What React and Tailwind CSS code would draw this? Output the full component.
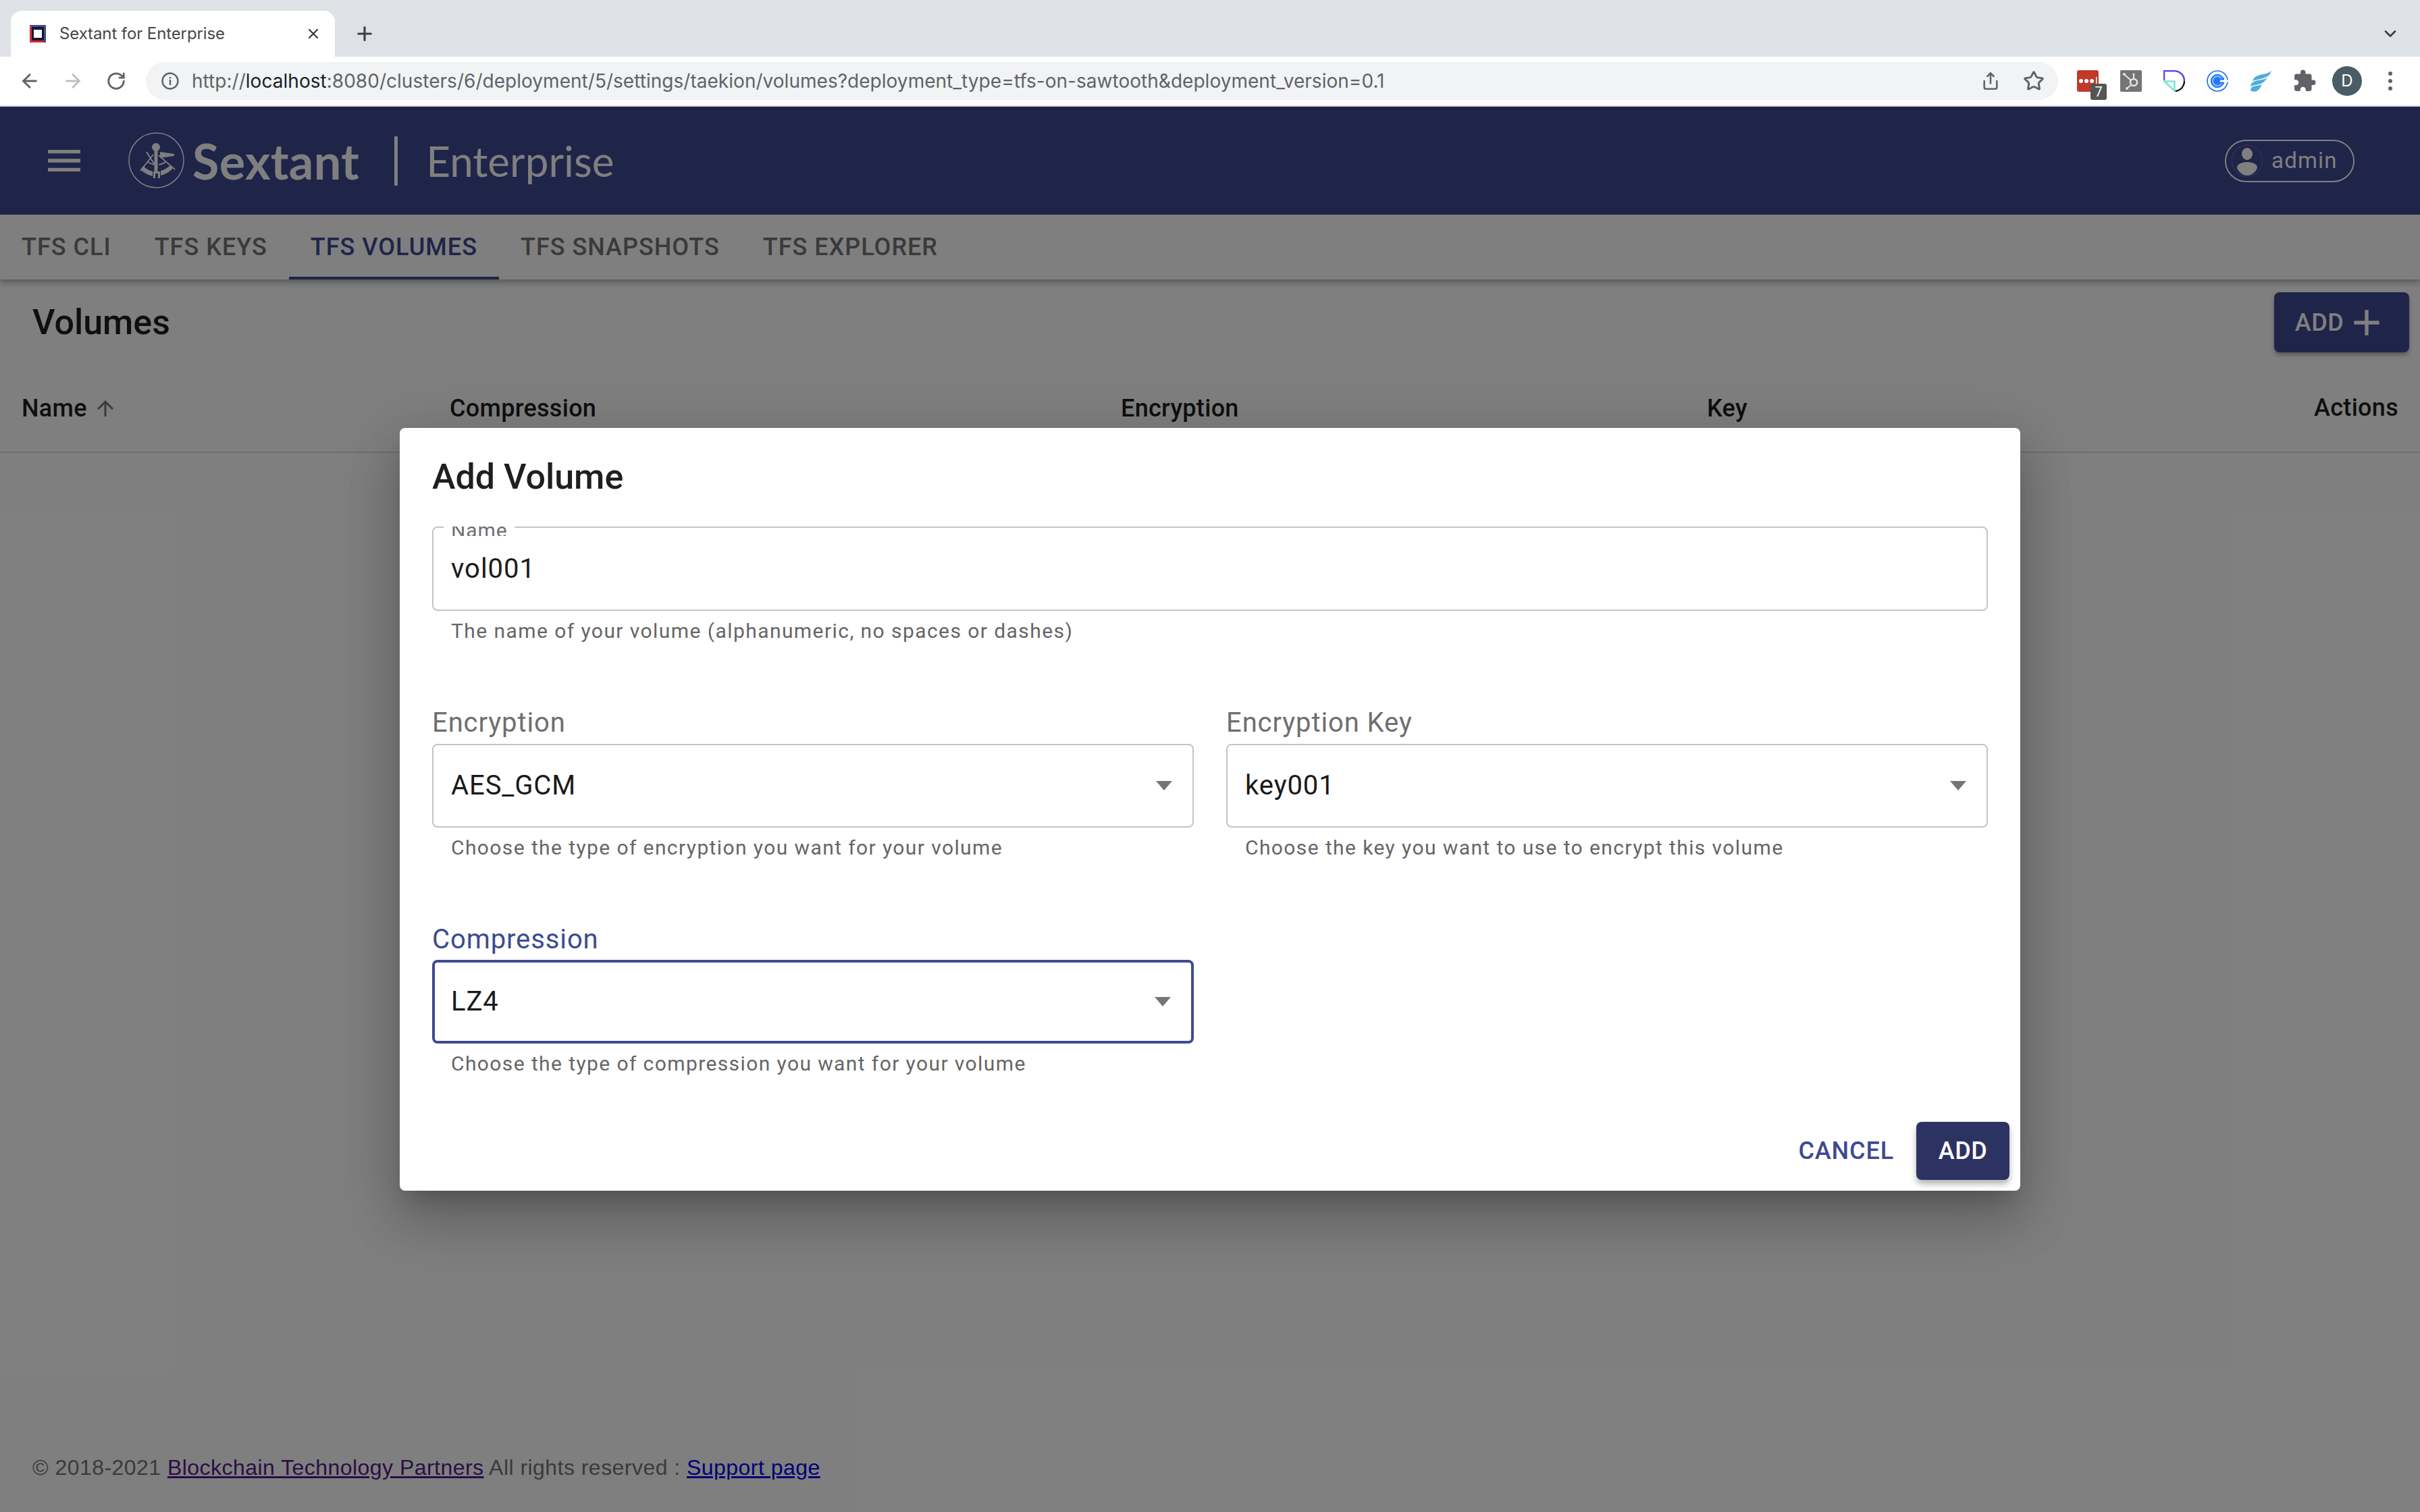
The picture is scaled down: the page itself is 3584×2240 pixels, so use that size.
import React from "react";
import { ArrowLeft, ArrowRight, RotateCw, Share, Star, X, Plus, ChevronDown } from "lucide-react";
import { MdExtension, MdMenu, MdAdd, MdArrowUpward } from "react-icons/md";

function Favicon() {
  return (
    <svg width="24" height="26" viewBox="0 0 24 26">
      <rect x="0" y="0" width="24" height="26" rx="1" fill="#3f4b91" />
      <path d="M0 2h3v21h18v3H0z" fill="#d32f3f" />
      <rect x="3" y="3" width="18" height="20" fill="#14162c" />
      <rect x="6" y="7" width="12" height="12" fill="#fff" />
    </svg>
  );
}

function LastPass() {
  return (
    <div className="relative h-8 w-8">
      <svg width="32" height="32" viewBox="0 0 32 32">
        <rect width="32" height="32" rx="3" fill="#c0392b" />
        <circle cx="6" cy="16" r="3" fill="#fff" />
        <circle cx="14" cy="16" r="3" fill="#fff" />
        <circle cx="22" cy="16" r="3" fill="#fff" />
        <rect x="28" y="10" width="1.5" height="12" fill="#fff" />
      </svg>
      <span className="absolute left-[20px] top-[20px] flex h-6 w-6 items-center justify-center rounded-[3px] bg-[#555555] text-[20px] leading-none text-white">7</span>
    </div>
  );
}

function Hubspot() {
  return (
    <svg width="32" height="32" viewBox="0 0 32 32">
      <rect width="32" height="32" rx="2" fill="#757575" />
      <circle cx="20" cy="18" r="5" fill="none" stroke="#e6e6e6" strokeWidth="2.5" />
      <path d="M20 13V7M16 15L7 7M16 22l-5 4" stroke="#e6e6e6" strokeWidth="2" fill="none" />
      <circle cx="20" cy="6" r="1.6" fill="#e6e6e6" />
      <circle cx="6" cy="6" r="2" fill="#e6e6e6" />
      <circle cx="10" cy="27" r="2" fill="#e6e6e6" />
    </svg>
  );
}

function DocMark() {
  return (
    <svg width="32" height="32" viewBox="0 0 32 32">
      <path d="M1 15V1h15c8 0 15 6 15 15" fill="none" stroke="#5b3df5" strokeWidth="2.4" />
      <path d="M31 16c0 8-6 15-14 15" fill="none" stroke="#111" strokeWidth="2.4" />
      <path d="M1.500 16.500h15v14z" fill="none" stroke="#7fe5cf" strokeWidth="2.6" />
    </svg>
  );
}

function Calendly() {
  return (
    <svg width="32" height="32" viewBox="0 0 32 32">
      <circle cx="16" cy="16" r="15" fill="none" stroke="#1a6cf0" strokeWidth="1.6" />
      <circle cx="16" cy="16" r="10.5" fill="#2f72f5" />
      <path d="M25 10c-2-3-5-5-9-5-6 0-11 5-11 11s5 11 11 11c4 0 7-2 9-5" fill="none" stroke="#fff" strokeWidth="1.4" />
      <path d="M22 12c-1.500-2-3.500-3-6-3a7 7 0 000 14c2.500 0 4.500-1 6-3" fill="none" stroke="#55d7ff" strokeWidth="2" />
      <path d="M20 16h12" stroke="#fff" strokeWidth="3" />
    </svg>
  );
}

function Feather() {
  return (
    <svg width="32" height="32" viewBox="0 0 32 32">
      <path d="M32 0C28 6 20 5 12 8 8 9.500 5 12 4 16c8-3 18-3 25-9 1-2 2-4 3-7z" fill="#4eadd9" />
      <path d="M26 11c-6 4-14 3-20 6-3 1.500-5 4-5 7 7-3 17-2 22-9 1-1 2-3 3-4z" fill="#4eadd9" />
      <path d="M18 21c-4 2-9 1.500-13 3-3 1-4 4-4 6 2 2 6 2 9 1 4-2 6-6 8-10z" fill="#4eadd9" />
    </svg>
  );
}

function SextantLogo() {
  return (
    <svg width="84" height="84" viewBox="0 0 84 84" className="shrink-0">
      <circle cx="41.500" cy="41.500" r="40.500" fill="none" stroke="#fff" strokeWidth="1.500" />
      <circle cx="41" cy="22" r="6" fill="#fff" />
      <path d="M38.500 27h5v32h-5z" fill="#fff" />
      <path d="M37 58h10v10H37z" fill="#fff" />
      <path d="M40 61h4v7h-4z" fill="#3e4892" />
      <path d="M47 29l21 3v3l-21 3z" fill="#fff" />
      <path d="M27 29l12 19" stroke="#fff" strokeWidth="2" />
      <path d="M37 33L18 57M45 34l24 21" stroke="#fff" strokeWidth="1.800" fill="none" />
      <path d="M18 55l4-5c4 4 10 7 14 8v7c-7-2-13-5-18-10z" fill="#fff" />
      <path d="M66 53l-4-4c-4 4-10 7-14 8v7c7-2 13-5 18-11z" fill="#fff" />
      <path d="M29 44c3 2 6 3 9 4M45 48c4-1 8-2 10-4" stroke="#fff" strokeWidth="1.800" fill="none" />
    </svg>
  );
}

function PersonBadge() {
  return (
    <svg width="46" height="50" viewBox="0 0 46 50" className="shrink-0">
      <circle cx="23" cy="25" r="23" fill="none" stroke="#fff" strokeOpacity="0.25" strokeWidth="1" />
      <ellipse cx="23" cy="15" rx="8" ry="9" fill="#fff" />
      <path d="M23 27c9 0 15 4 15 8s-7 12-15 12S8 39 8 35s6-8 15-8z" fill="#fff" />
    </svg>
  );
}

function InfoIcon() {
  return (
    <svg width="28" height="28" viewBox="0 0 28 28" className="shrink-0">
      <circle cx="14" cy="14" r="11.500" fill="none" stroke="#5f6368" strokeWidth="2.400" />
      <rect x="12.800" y="12" width="2.400" height="8" fill="#5f6368" />
      <rect x="12.800" y="8" width="2.400" height="2.400" fill="#5f6368" />
    </svg>
  );
}

function BrowserChrome() {
  return (
    <div className="shrink-0">
      <div className="flex h-[84px] items-end bg-[#dee1e6]">
        <div className="ml-4 flex h-[68px] w-[480px] items-center rounded-t-2xl bg-white pl-7 pr-5 text-[#45474a]">
          <Favicon />
          <span className="ml-5 flex-1 font-['Inter',sans-serif] text-[24px] leading-none tracking-[-0.1px]">Sextant for Enterprise</span>
          <X size={24} strokeWidth={2.4} className="text-[#3c4043]" />
        </div>
        <div className="ml-[28px] flex h-[68px] items-center text-[#3c4043]">
          <Plus size={32} strokeWidth={2.4} />
        </div>
        <div className="ml-auto flex h-[68px] items-center pr-[30px] text-[#3c4043]">
          <ChevronDown size={28} strokeWidth={2.4} />
        </div>
      </div>
      <div className="flex h-[74px] items-center border-b-2 border-[#dadce0] bg-white">
        <div className="flex w-[216px] items-center pl-[28px] text-[#5f6368]">
          <ArrowLeft size={32} strokeWidth={2.2} />
          <ArrowRight size={32} strokeWidth={2.2} className="ml-[32px] text-[#bdc1c6]" />
          <RotateCw size={30} strokeWidth={2.2} className="ml-[33px]" />
        </div>
        <div className="flex h-[56px] w-[2832px] items-center rounded-full bg-[#f1f3f4] pl-[22px] pr-[20px]">
          <InfoIcon />
          <span className="ml-[18px] flex-1 font-['Inter',sans-serif] text-[28px] leading-none tracking-[0.03px] text-[#5f6368]">
            http://<span className="text-[#202124]">localhost</span>:8080/clusters/6/deployment/5/settings/taekion/volumes?deployment_type=tfs-on-sawtooth&deployment_version=0.1
          </span>
          <Share size={28} strokeWidth={2.2} className="text-[#5f6368]" />
          <Star size={32} strokeWidth={2.2} className="ml-[34px] text-[#5f6368]" />
        </div>
        <div className="ml-[28px] flex items-center">
          <LastPass />
          <div className="ml-8"><Hubspot /></div>
          <div className="ml-8"><DocMark /></div>
          <div className="ml-8"><Calendly /></div>
          <div className="ml-8"><Feather /></div>
          <MdExtension size={36} className="ml-[31px] text-[#5f6368]" />
          <span className="ml-[23px] flex h-11 w-11 items-center justify-center rounded-full bg-[#4a5c66] font-['Inter',sans-serif] text-[24px] text-white">D</span>
          <span className="ml-[39px] flex flex-col gap-[5px]">
            <i className="block h-[6px] w-[6px] rounded-full bg-[#5f6368]" />
            <i className="block h-[6px] w-[6px] rounded-full bg-[#5f6368]" />
            <i className="block h-[6px] w-[6px] rounded-full bg-[#5f6368]" />
          </span>
        </div>
      </div>
    </div>
  );
}

function SelectField({ label, value, help, focused }) {
  return (
    <div>
      <div className={`mb-2 h-12 text-[40px] tracking-[0.9px] ${focused ? "leading-[52px] text-[#3e4a92]" : "leading-[50px] text-[#6f6f6f]"}`}>{label}</div>
      <div className={`flex h-[124px] items-center rounded-lg bg-white pr-[30px] text-[40px] tracking-[0.9px] text-[#1a1a1a] ${focused ? "border-4 border-[#3e4a92] pl-6" : "border-2 border-[#c4c4c4] pl-[26px]"}`}>
        <span className="flex-1">{value}</span>
        <span className="h-0 w-0 border-x-[12px] border-t-[14px] border-x-transparent border-t-[#757575]" />
      </div>
      <div className="mt-3 h-9 pl-7 text-[30px] leading-9 tracking-[1.4px] text-[#666666]">{help}</div>
    </div>
  );
}

function AddVolumeDialog() {
  return (
    <div className="flex h-[1130px] w-[2400px] flex-col rounded-lg bg-white shadow-[0_22px_30px_-14px_rgba(0,0,0,0.2),0_48px_76px_6px_rgba(0,0,0,0.14),0_18px_92px_16px_rgba(0,0,0,0.12)]">
      <div className="flex h-[146px] items-start px-12 pt-[38px]">
        <h2 className="text-[52px] font-medium leading-[70px] text-[#1f1f1f]">Add Volume</h2>
      </div>
      <div className="px-12">
        <div className="relative">
          <div className="flex h-[125px] items-center rounded-lg border-2 border-[#c4c4c4] pl-[26px] text-[40px] tracking-[1px] text-[#1a1a1a]">vol001</div>
          <span className="absolute left-[17px] top-0 h-[14px] w-[105px] overflow-hidden bg-white pl-[11px] text-[30px] leading-[11px] tracking-[0.9px] text-[#6f6f6f]">Name</span>
        </div>
        <div className="mt-3 h-9 pl-7 text-[30px] leading-9 tracking-[1.43px] text-[#666666]">The name of your volume (alphanumeric, no spaces or dashes)</div>
        <div className="mt-[93px] grid grid-cols-2 gap-x-12 gap-y-[92px]">
          <SelectField label="Encryption" value="AES_GCM" help="Choose the type of encryption you want for your volume" />
          <SelectField label="Encryption Key" value="key001" help="Choose the key you want to use to encrypt this volume" />
          <SelectField label="Compression" value="LZ4" help="Choose the type of compression you want for your volume" focused />
        </div>
      </div>
      <div className="mt-auto flex items-center justify-end gap-[33px] pb-4 pr-4">
        <button className="text-[36px] font-medium tracking-[0.9px] text-[#3e4a92]">CANCEL</button>
        <button className="h-[86px] w-[138px] rounded-lg bg-[#2c3363] text-[36px] font-medium tracking-[0.5px] text-white shadow-[0_6px_10px_rgba(0,0,0,0.3)]">ADD</button>
      </div>
    </div>
  );
}

export default function App() {
  return (
    <div className="flex h-[2240px] w-[3584px] flex-col overflow-hidden bg-white font-['Roboto',sans-serif]">
      <BrowserChrome />
      <div className="relative flex flex-1 flex-col">
        <header className="flex h-[160px] shrink-0 items-center bg-[#3e4892] text-white">
          <MdMenu size={64} className="ml-[63px]" />
          <div className="ml-[63px]"><SextantLogo /></div>
          <span className="ml-[11px] font-['Lato',sans-serif] text-[72px] font-bold leading-none tracking-[0.3px]">Sextant</span>
          <span className="ml-[52px] h-[73px] w-[5px] bg-white" />
          <span className="ml-[42px] font-['Lato',sans-serif] text-[62px] leading-none">Enterprise</span>
          <div className="ml-auto mr-[97px] flex h-[63px] w-[192px] items-center rounded-full border-2 border-white pl-2">
            <PersonBadge />
            <span className="ml-[13px] text-[33px] tracking-[1.2px]">admin</span>
          </div>
        </header>

        <nav className="flex h-[96px] shrink-0 items-end bg-white shadow-[0_4px_10px_rgba(0,0,0,0.35)]">
          {["TFS CLI", "TFS KEYS", "TFS VOLUMES", "TFS SNAPSHOTS", "TFS EXPLORER"].map((tab) => (
            <div
              key={tab}
              className={`flex h-[96px] items-center border-b-4 px-8 pt-1 text-[36px] font-medium tracking-[1px] ${tab === "TFS VOLUMES" ? "border-[#3e4892] text-[#3e4892]" : "border-transparent text-[#757575]"}`}
            >
              {tab}
            </div>
          ))}
        </nav>

        <div className="flex items-center justify-between pl-12 pr-4 pt-[19px]">
          <h1 className="text-[52px] font-medium text-[#1f1f1f]">Volumes</h1>
          <button className="flex h-[89px] w-[200px] items-center justify-center gap-[2px] rounded-lg bg-[#3e4892] text-[36px] font-medium tracking-[0.5px] text-white shadow-[0_4px_6px_rgba(0,0,0,0.3)]">
            ADD <MdAdd size={64} />
          </button>
        </div>

        <div className="mt-[18px] grid h-[131px] grid-cols-[634px_994px_868px_1fr_auto] items-center border-b-2 border-[#e0e0e0] px-8 text-[36px] font-medium tracking-[0.3px] text-[#1f1f1f]">
          <span className="flex items-center">Name <MdArrowUpward size={36} className="ml-[9px] text-[#757575]" /></span>
          <span>Compression</span>
          <span>Encryption</span>
          <span>Key</span>
          <span className="-mt-[2px]">Actions</span>
        </div>

        <footer className="mt-auto pb-[48px] pl-12 font-['Liberation_Sans',sans-serif] text-[32px] leading-9 tracking-[0.46px] text-[#757575]">
          © 2018-2021 <a className="text-[#551a8b] underline">Blockchain Technology Partners</a> All rights reserved : <a className="text-[#0000ee] underline">Support page</a>
        </footer>

        <div className="absolute inset-0 flex items-center justify-center bg-black/50">
          <AddVolumeDialog />
        </div>
      </div>
    </div>
  );
}
